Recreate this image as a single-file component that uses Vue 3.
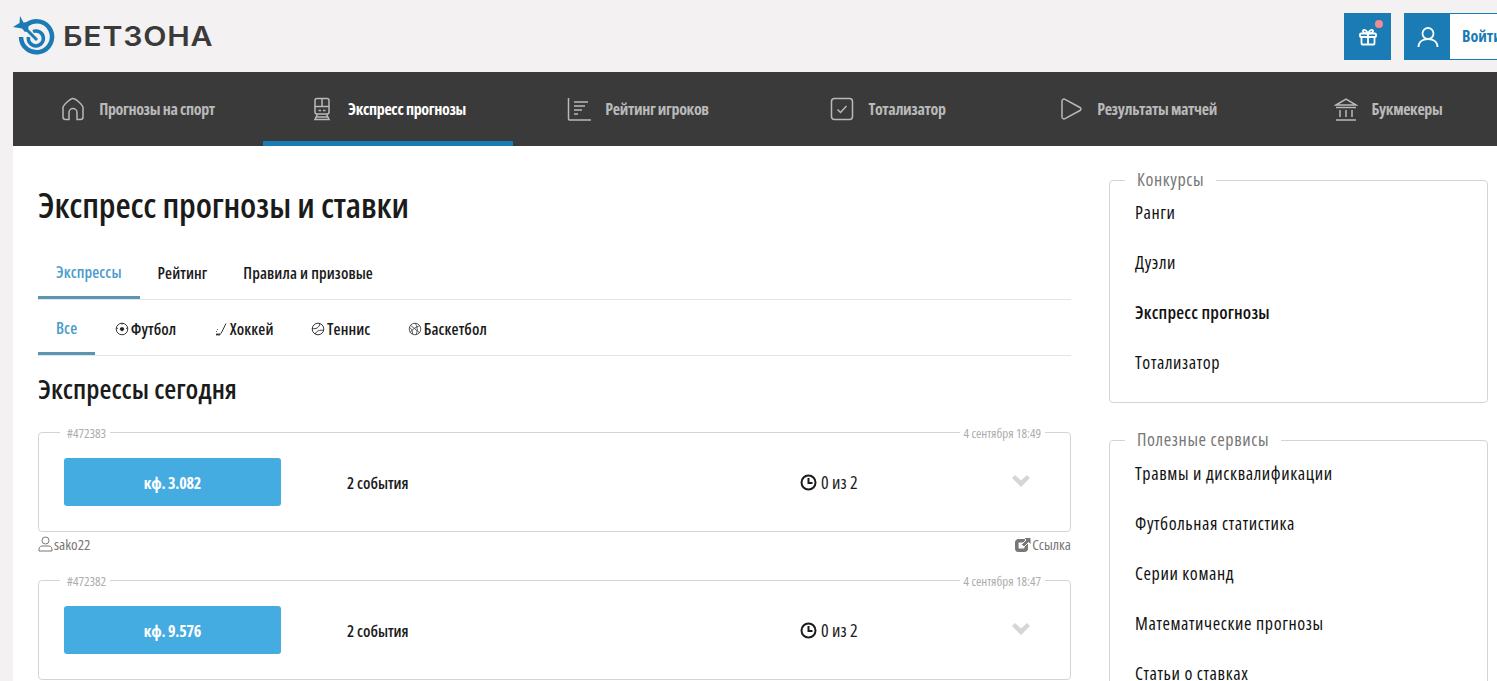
<script setup>
const nav = [
  { t: 'Прогнозы на спорт', i: 'home' },
  { t: 'Экспресс прогнозы', i: 'train', active: true },
  { t: 'Рейтинг игроков', i: 'rank' },
  { t: 'Тотализатор', i: 'check' },
  { t: 'Результаты матчей', i: 'play' },
  { t: 'Букмекеры', i: 'bank' },
]
const cards = [
  { id: '#472383', date: '4 сентября 18:49', k: 'кф. 3.082' },
  { id: '#472382', date: '4 сентября 18:47', k: 'кф. 9.576' },
]
const contests = ['Ранги', 'Дуэли', 'Экспресс прогнозы', 'Тотализатор']
const services = ['Травмы и дисквалификации', 'Футбольная статистика', 'Серии команд', 'Математические прогнозы', 'Статьи о ставках']
</script>

<template>
  <div class="page">
    <header class="top">
      <div class="logo">
        <svg width="42" height="42" viewBox="0 0 42 42" class="logo-mark">
          <path d="M14 9.500A15.500 15.500 0 1 1 8 22" fill="none" stroke="#1a7bb5" stroke-width="4.500"/>
          <path d="M20 16.500A7.500 7.500 0 1 1 15.500 22" fill="none" stroke="#1a7bb5" stroke-width="3.500"/>
          <path d="M9 10L24 25" stroke="#1a7bb5" stroke-width="3"/>
          <path d="M7 1l3.500 6.500L16 7l-1 9-3 1-3-3.500L0 12l6.500-4z" fill="#1a7bb5"/>
        </svg>
        <span class="logo-text">БЕТЗОНА</span>
      </div>
      <div class="actions">
        <div class="gift">
          <svg width="20" height="20" viewBox="0 0 20 20" fill="none" stroke="#fff" stroke-width="1.800">
            <rect x="2" y="6.500" width="16" height="3.500" rx="1"/>
            <path d="M3.500 10v6.500a1 1 0 0 0 1 1h11a1 1 0 0 0 1-1V10M10 6.500v11"/>
            <path d="M10 6.500C8 2 4.500 2 5 4.500 5.300 6 8 6.500 10 6.500 12 6.500 14.700 6 15 4.500 15.500 2 12 2 10 6.500Z"/>
          </svg>
          <i class="dot"></i>
        </div>
        <div class="login">
          <div class="login-icon">
            <svg width="24" height="24" viewBox="0 0 24 24" fill="none" stroke="#fff" stroke-width="1.800">
              <circle cx="12" cy="8.500" r="5.500"/>
              <path d="M2.500 22c0-5 4-8 9.500-8s9.500 3 9.500 8"/>
            </svg>
          </div>
          <span class="login-text">Войти</span>
        </div>
      </div>
    </header>

    <nav class="nav">
      <a v-for="n in nav" :key="n.t" class="nav-item" :class="{ active: n.active }">
        <svg width="24" height="24" viewBox="0 0 24 24" fill="none" stroke="currentColor" stroke-width="1.500" class="nav-icon">
          <template v-if="n.i === 'home'">
            <path d="M2 10.500C2 8.500 9 1.500 12 1.500s10 7 10 9V20a2.500 2.500 0 0 1-2.500 2.500H16v-7a4 4 0 0 0-8 0v7H4.500A2.500 2.500 0 0 1 2 20z"/>
          </template>
          <template v-else-if="n.i === 'train'">
            <rect x="5" y="1.500" width="14" height="15.500" rx="2"/>
            <path d="M5 9.500h14M12 1.500v8M8.500 13.500h2.500M13 13.500h2.500M7.500 17L5 22.500h14L16.500 17M6 20h12"/>
          </template>
          <template v-else-if="n.i === 'rank'">
            <path d="M1.500 1v21a1 1 0 0 0 1 1H24M7 5h14M7 9h11M7 13h8M7 17h4"/>
          </template>
          <template v-else-if="n.i === 'check'">
            <rect x="1.500" y="1.500" width="21" height="21" rx="3"/>
            <path d="M7.500 12.500l3 3 6-6.500"/>
          </template>
          <template v-else-if="n.i === 'play'">
            <path d="M3 4a2 2 0 0 1 3-1.700l15 8.200a1.700 1.700 0 0 1 0 3L6 21.700A2 2 0 0 1 3 20z"/>
          </template>
          <template v-else>
            <path d="M2 8L12 2l10 6zM2 10.500h20M6 13v7M12 13v7M18 13v7M2 23h20"/>
          </template>
        </svg>
        <span>{{ n.t }}</span>
      </a>
    </nav>

    <div class="body">
      <main class="main">
        <h1>Экспресс прогнозы и ставки</h1>
        <div class="tabs">
          <a class="tab active">Экспрессы</a>
          <a class="tab">Рейтинг</a>
          <a class="tab">Правила и призовые</a>
        </div>
        <div class="tabs sub">
          <a class="tab active">Все</a>
          <a class="tab">
            <svg width="14" height="14" viewBox="0 0 14 14" fill="none" stroke="#222" stroke-width=".9"><circle cx="7" cy="7" r="5.800"/><path d="M5.800 5.800h2.400l.7 1.700L7 9 5.100 7.500z" fill="#222"/><path d="M7 1.200v1.500M1.500 6l1.400.5M12.500 6l-1.400.5"/></svg>Футбол
          </a>
          <a class="tab">
            <svg width="14" height="14" viewBox="0 0 14 14" fill="none" stroke="#333" stroke-width="1"><path d="M12 1.500L7 11.500c-.3.500-.7.700-1.500.7"/><path d="M2 12.500h4" stroke-width="1.800"/><path d="M2 9.500h1M3 7.500h1" stroke-width=".8"/></svg>Хоккей
          </a>
          <a class="tab">
            <svg width="14" height="14" viewBox="0 0 14 14" fill="none" stroke="#222" stroke-width=".9"><circle cx="7" cy="7" r="5.800"/><path d="M1.300 6.500C5 7.500 8 5.500 9 1.800M4 12c1.500-3 5-4.500 8.500-3.500"/></svg>Теннис
          </a>
          <a class="tab">
            <svg width="14" height="14" viewBox="0 0 14 14" fill="none" stroke="#333" stroke-width=".8"><circle cx="7" cy="7" r="5.800"/><path d="M2.500 3.300l9 7.400M7 1.200c2.500 3 3 7 1 11.600M11.800 3.800C8.500 4.500 4 7.500 2.200 10.500M1.500 5.500c2 1 3 3 3 6.500"/></svg>Баскетбол
          </a>
        </div>
        <h2>Экспрессы сегодня</h2>

        <section v-for="c in cards" :key="c.id" class="bet">
          <div class="card">
            <span class="leg left">{{ c.id }}</span>
            <span class="leg right">{{ c.date }}</span>
            <div class="coef">{{ c.k }}</div>
            <div class="events">2 события</div>
            <div class="progress">
              <svg width="17" height="17" viewBox="0 0 17 17" fill="none" stroke="#1b1b1b" stroke-width="2"><circle cx="8.500" cy="8.500" r="7"/><path d="M8.500 4v5H12.500"/></svg>
              0 из 2
            </div>
            <svg class="chev" width="18" height="12" viewBox="0 0 18 12"><path d="M0 3l3-3 6 5.500L15 0l3 3-9 9z" fill="#d6d6d6"/></svg>
          </div>
          <div class="foot">
            <span class="who">
              <svg width="15" height="16" viewBox="0 0 15 16" fill="none" stroke="#777" stroke-width="1"><circle cx="7.500" cy="4.500" r="3.500"/><path d="M1 15c-.5-3 1-5 3-5h7c2 0 3.500 2 3 5z"/></svg>
              sako22
            </span>
            <span class="who">
              <svg width="16" height="15" viewBox="0 0 16 15">
                <rect x="1.800" y="3.800" width="9.400" height="9.400" rx="2" fill="none" stroke="#777" stroke-width="3.600"/>
                <path d="M8.500 .5H16V8l-2.500-2.500L9 10 6.500 7.500 11 3z" fill="#777" stroke="#fff" stroke-width="1"/>
              </svg>
              Ссылка
            </span>
          </div>
        </section>
      </main>

      <aside class="side">
        <div class="box b1">
          <span class="box-title">Конкурсы</span>
          <a v-for="s in contests" :key="s" class="link" :class="{ strong: s === 'Экспресс прогнозы' }">{{ s }}</a>
        </div>
        <div class="box b2">
          <span class="box-title">Полезные сервисы</span>
          <a v-for="s in services" :key="s" class="link">{{ s }}</a>
        </div>
      </aside>
    </div>
  </div>
</template>

<style>
html, body { margin: 0; overflow: hidden; background: #f3f1f2; }
</style>

<style scoped>
.page {
  width: 1497px;
  height: 681px;
  overflow: hidden;
  padding-left: 13px;
  box-sizing: border-box;
  background: #f3f1f2;
  font-family: "Open Sans", "Noto Sans", sans-serif;
  font-stretch: 75%;
  color: #1b1b1b;
}
.top {
  height: 72px;
  width: 1484px;
  display: flex;
  justify-content: space-between;
  align-items: flex-start;
}
.logo { display: flex; align-items: center; padding-top: 15px; }
.logo-mark { display: block; }
.logo-text {
  margin-left: 8px;
  font: 600 27px/1 "Inter", sans-serif;
  letter-spacing: .7px;
  color: #3a3a3a;
  transform: scaleX(1.12);
  transform-origin: left center;
}
.actions { display: flex; gap: 13px; padding-top: 13px; margin-right: -17px; }
.gift {
  position: relative;
  width: 47px;
  height: 47px;
  background: #1a7bb5;
  display: flex;
  align-items: center;
  justify-content: center;
}
.dot {
  position: absolute;
  top: 7px;
  right: 8px;
  width: 8px;
  height: 8px;
  border-radius: 50%;
  background: #f08c94;
}
.login {
  display: flex;
  height: 47px;
  width: 110px;
  flex: none;
  box-sizing: border-box;
  border: 1px solid #1a7bb5;
  background: #fff;
}
.login-icon {
  width: 45px;
  background: #1a7bb5;
  display: flex;
  align-items: center;
  justify-content: center;
}
.login-text { padding-left: 12px; line-height: 45px; font-size: 16px; font-weight: 700; color: #1a7bb5; }
.nav { display: flex; width: 1500px; height: 74px; background: #3a3a3a; }
.nav-item {
  flex: 0 0 250px;
  box-sizing: border-box;
  display: flex;
  align-items: center;
  justify-content: center;
  gap: 14px;
  padding-top: 5px;
  font-size: 16px;
  letter-spacing: -.35px;
  font-weight: 700;
  color: #b9b9b9;
  border-bottom: 5px solid transparent;
}
.nav-item.active { color: #fff; border-bottom-color: #1a7bb5; }
.nav-icon { color: #b9b9b9; flex: none; }
.body {
  display: flex;
  background: #fff;
  width: 1484px;
  height: 535px;
  overflow: hidden;
  padding: 34px 9px 0 25px;
  box-sizing: border-box;
  gap: 38px;
}
.main { width: 1033px; flex: none; }
h1 { margin: 0; font-size: 35px; letter-spacing: -.15px; line-height: 50px; font-weight: 600; }
.tabs {
  display: flex;
  margin-top: 26px;
  height: 43px;
  border-bottom: 1px solid #e2e5e6;
}
.tabs.sub { margin-top: 12px; gap: 1.500px; }
.tab {
  display: flex;
  align-items: center;
  gap: 2px;
  padding: 0 18px 9px;
  box-sizing: border-box;
  height: 43px;
  font-size: 16px;
  letter-spacing: .1px;
  font-weight: 600;
  color: #1b1b1b;
}
.tab.active { color: #4b9ccb; border-bottom: 3px solid #5c94b4; }
h2 { margin: 14px 0 0; font-size: 27.500px; line-height: 38px; font-weight: 600; }
.bet { margin-top: 24px; }
.bet + .bet { margin-top: 26px; }
.card {
  position: relative;
  height: 100px;
  box-sizing: border-box;
  border: 1px solid #cfd6da;
  border-radius: 4px;
  display: flex;
  align-items: flex-start;
  padding: 25px 0 0 25px;
}
.leg {
  position: absolute;
  top: -6px;
  padding: 0 4px;
  background: #fff;
  font-size: 13px;
  line-height: 12px;
  color: #acacac;
}
.leg.left { left: 21px; padding-left: 7px; }
.leg.right { right: 25px; }
.coef {
  width: 217px;
  height: 48px;
  flex: none;
  border-radius: 3px;
  background: #45ace1;
  color: #fff;
  font-size: 16px;
  letter-spacing: -.2px;
  font-weight: 700;
  line-height: 50px;
  text-align: center;
}
.events { margin-left: 66px; width: 453px; line-height: 50px; font-size: 16px; font-weight: 600; flex: none; }
.progress { display: flex; align-items: center; gap: 4px; height: 48px; width: 212px; flex: none; font-size: 18px; }
.chev { margin-top: 17px; flex: none; }
.foot {
  display: flex;
  justify-content: space-between;
  margin-top: 2px;
  height: 20px;
  font-size: 15px;
  color: #777;
}
.who { display: flex; align-items: center; gap: 1px; }
.side { width: 379px; flex: none; }
.box {
  position: relative;
  box-sizing: border-box;
  border: 1px solid #cfd6da;
  border-radius: 4px;
  display: flex;
  flex-direction: column;
  padding: 7px 25px 0;
  height: 400px;
}
.box.b1 { height: 223px; margin-bottom: 37px; }
.box.b2 { padding-top: 8px; }
.box-title {
  position: absolute;
  top: -12px;
  left: 15px;
  padding: 0 12px;
  background: #fff;
  font-size: 18px;
  letter-spacing: .6px;
  line-height: 20px;
  color: #777;
}
.link { display: block; height: 50px; line-height: 49px; flex: none; font-size: 18px; letter-spacing: .6px; color: #111; }
.link.strong { font-weight: 600; letter-spacing: .2px; }
</style>
